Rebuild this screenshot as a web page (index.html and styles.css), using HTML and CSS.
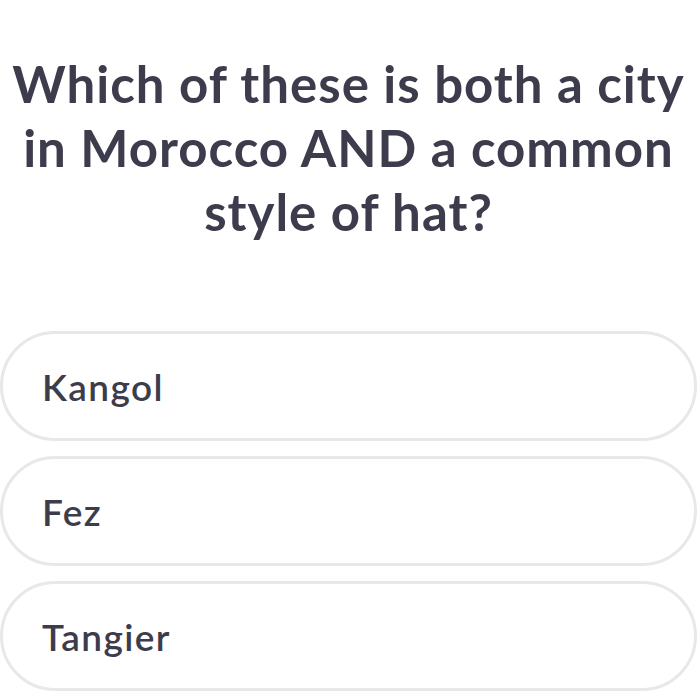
FILE: index.html
```html
<!DOCTYPE html>
<html>
<head>
<meta charset="utf-8">
<link rel="stylesheet" href="styles.css">
</head>
<body>
<main class="quiz">
  <h1 class="question">Which of these is both a city in Morocco AND a common style of hat?</h1>
  <ul class="options">
    <li class="option">Kangol</li>
    <li class="option">Fez</li>
    <li class="option">Tangier</li>
  </ul>
</main>
</body>
</html>
```
FILE: styles.css
```css
html, body {
  margin: 0;
  padding: 0;
  background: #ffffff;
}
body {
  font-family: Lato, "Noto Sans", sans-serif;
  color: #3d3c4c;
}
.quiz {
  width: 697px;
  display: flex;
  flex-direction: column;
}
.question {
  margin: 52px 0 0;
  padding: 0;
  font-size: 51px;
  font-weight: 700;
  letter-spacing: 1px;
  line-height: 64px;
  text-align: center;
}
.options {
  list-style: none;
  margin: 87px 0 0;
  padding: 0;
  display: flex;
  flex-direction: column;
  gap: 15px;
}
.option {
  box-sizing: border-box;
  height: 110px;
  border: 3px solid #e8e8eb;
  border-radius: 55px;
  padding: 0 39px;
  display: flex;
  align-items: center;
  font-size: 37px;
  font-weight: 600;
  letter-spacing: 1.4px;
}
```
